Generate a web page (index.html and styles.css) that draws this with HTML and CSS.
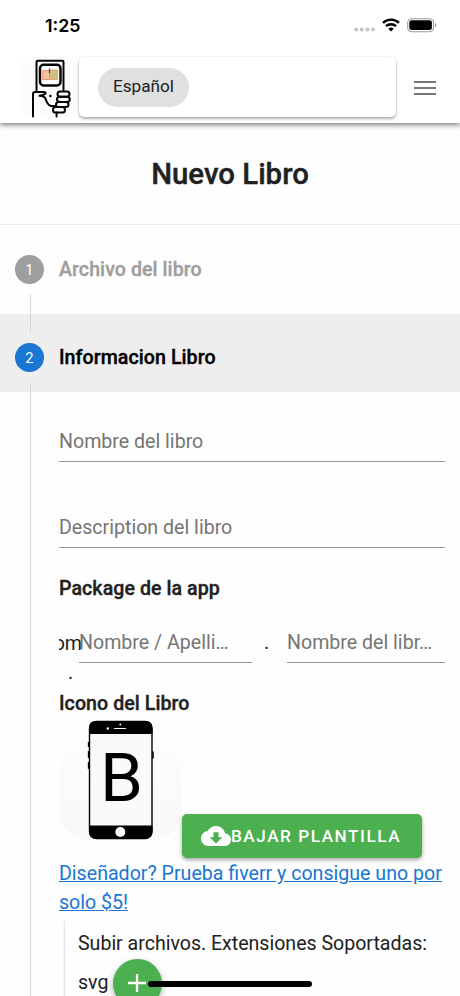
FILE: index.html
```html
<!DOCTYPE html>
<html lang="es">
<head>
<meta charset="utf-8">
<meta name="viewport" content="width=device-width">
<title>Nuevo Libro</title>
<link rel="stylesheet" href="styles.css">
</head>
<body>
<div class="screen">
  <header class="top">
    <div class="status">
      <span class="time">1:25</span>
      <svg class="signal" width="22" height="5" viewBox="0 0 22 5" fill="#c5c5c5"><circle cx="2.2" cy="2.5" r="2"/><circle cx="7.8" cy="2.5" r="2"/><circle cx="13.4" cy="2.5" r="2"/><circle cx="19" cy="2.5" r="2"/></svg>
      <svg class="wifi" width="18" height="14" viewBox="0 0 18 14"><g fill="none" stroke="#000" stroke-width="2.4"><path d="M1 4.9a11.4 11.4 0 0 1 16 0"/><path d="M4 8.2a7.2 7.2 0 0 1 10 0"/></g><path d="M6.3 10.7a4 4 0 0 1 5.4 0L9 13.5z"/></svg>
      <svg class="battery" width="30" height="15" viewBox="0 0 30 15"><rect x=".7" y=".7" width="25.8" height="13" rx="4" fill="#fff" stroke="#9b9b9b" stroke-width="1.1"/><rect x="2.3" y="2.3" width="22.6" height="9.8" rx="2.3"/><path d="M28 5v4.4c1.7-.6 1.7-3.8 0-4.4z" fill="#999"/></svg>
    </div>
    <div class="bar">
      <div class="logo">
        <svg width="60" height="60" viewBox="0 0 60 60" fill="none" stroke="#050505" stroke-width="2" stroke-linejoin="round" stroke-linecap="round">
          <path d="M17.500 33V4q0-1.300 1.300-1.300h24.400q1.300 0 1.300 1.300V32"/>
          <rect x="21" y="6.700" width="20.500" height="20.800" rx="3.500" stroke-width="2.400"/>
          <path d="M24 12.500h7v9h-7z" fill="#edc4a0" stroke="#ed8150" stroke-width=".8"/>
          <path d="M31 12h7.500v9.500H31z" fill="#cfbd83" stroke="#ed9a60" stroke-width=".8"/>
          <path d="M30.500 11v4" stroke="#554e49" stroke-width="1.300"/>
          <path d="M14 58.500V36q0-2 2-2h8.500q3 0 1.800 1.700-1.300 1.500-5.800 2.100 5 .300 6.200 3.200 1.500 5.500 5 7h5M37.600 54.500V58.500"/>
          <circle cx="31.400" cy="38" r=".6" stroke-width="1.300"/>
          <rect x="38.500" y="33.500" width="12" height="5.200" rx="2.600"/>
          <rect x="38" y="38.700" width="12.800" height="5.200" rx="2.600"/>
          <rect x="37" y="43.900" width="12.500" height="5.200" rx="2.600"/>
          <rect x="34" y="49.100" width="12" height="5.400" rx="2.600"/>
        </svg>
      </div>
      <div class="langs"><span class="chip">Español</span></div>
      <button class="menu" aria-label="Menu"><span></span><span></span><span></span></button>
    </div>
  </header>

  <h1 class="title">Nuevo Libro</h1>

  <main class="stepper">
    <div class="step step-first">
      <div class="rail"><span class="dot">1</span><span class="line"></span></div>
      <span class="label">Archivo del libro</span>
    </div>
    <div class="step step-active">
      <div class="rail"><span class="line"></span><span class="dot">2</span><span class="line lower"></span></div>
      <span class="label">Informacion Libro</span>
    </div>
    <div class="content">
      <div class="content-rail"></div>
      <div class="form">
        <div class="field">Nombre del libro</div>
        <div class="field second">Description del libro</div>
        <div class="heading package">Package de la app</div>
        <div class="package-row">
          <div class="prefix"><span class="com">com</span><span class="point">.</span></div>
          <div class="field author">Nombre / Apelli…</div>
          <span class="separator">.</span>
          <div class="field book">Nombre del libr…</div>
        </div>
        <div class="heading icon-heading">Icono del Libro</div>
        <div class="icon-row">
          <div class="app-icon">
            <svg width="123" height="120" viewBox="0 0 123 120">
              <rect x="30.500" y="1.500" width="62.500" height="117" rx="7" fill="#fafafa" stroke="#000" stroke-width="1.400"/>
              <path d="M30 14V8q0-7 7-7h49.500q7 0 7 7v6zM30 105.500h63.500v6q0 7-7 7H37q-7 0-7-7z"/>
              <path d="M29.600 22v5M29.600 31v7M29.600 42v7M94 31.500v7" stroke="#000" stroke-width="1.500"/>
              <path d="M55 8.500h12" stroke="#fff"/><circle cx="48.800" cy="8.500" r="1.200" fill="#fff"/><circle cx="61.300" cy="4.500" r=".9" fill="#fff"/>
              <circle cx="61.300" cy="112" r="5" fill="#fff"/>
              <text class="icon-letter" x="41" y="81" textLength="43" lengthAdjust="spacingAndGlyphs">B</text>
            </svg>
          </div>
          <button class="download">
            <svg width="30" height="30" viewBox="0 0 24 24"><path fill="#fff" d="M19.350 10.040C18.670 6.590 15.640 4 12 4 9.110 4 6.600 5.640 5.350 8.040 2.340 8.360 0 10.910 0 14c0 3.310 2.690 6 6 6h13c2.760 0 5-2.240 5-5 0-2.640-2.050-4.780-4.650-4.960zM17 13l-5 5-5-5h3V9h4v4z"/></svg>
            <span>BAJAR PLANTILLA</span>
          </button>
        </div>
        <a class="designer" href="#">Diseñador? Prueba fiverr y consigue uno por<br>solo $5!</a>
        <div class="upload">
          <div>Subir archivos. Extensiones Soportadas:</div>
          <div class="upload-row"><span>svg</span><button class="add" aria-label="Subir"><svg width="18" height="18" viewBox="0 0 18 18"><path d="M9 0v18M0 9h18" stroke="#fff" stroke-width="2.300"/></svg></button></div>
        </div>
      </div>
    </div>
  </main>
  <div class="home"></div>
</div>
</body>
</html>
```

FILE: styles.css
```css
* { box-sizing: border-box; }
body { margin: 0; background: #fff; overflow: hidden; }
button { border: 0; padding: 0; font: inherit; }
.screen { position: relative; width: 460px; height: 996px; overflow: hidden; font-family: Roboto, sans-serif; font-size: 19.6px; line-height: 29.4px; color: #212121; background: #fefefe; }
.top { height: 123px; background: #fff; box-shadow: 0 2px 5px rgba(0,0,0,.5); }
.status { height: 56px; display: flex; align-items: flex-start; padding-left: 45px; }
.time { width: 309px; padding-top: 15px; font: 600 17.8px/22px Inter, sans-serif; color: #000; }
.signal { margin-top: 27px; margin-right: 6px; }
.wifi { margin-top: 18px; margin-right: 7px; }
.battery { margin-top: 18px; }
.bar { display: flex; padding-left: 19px; }
.logo { width: 60px; height: 62px; padding-top: 2px; border-radius: 16px; background: #fcfcfc; }
.langs { width: 317px; height: 60px; margin-top: 1px; padding: 11px 19px; border-radius: 5px; background: #fff; box-shadow: 0 2px 3px rgba(0,0,0,.3), 0 0 2px rgba(0,0,0,.12); }
.chip { display: flex; align-items: center; justify-content: center; width: 91px; height: 39px; padding-bottom: 1px; border-radius: 20px; background: #e0e0e0; font-size: 17.2px; }
.menu { display: flex; flex-direction: column; gap: 4px; width: 22px; margin: 25px 0 0 18px; background: transparent; }
.menu span { height: 2px; background: #757575; }
.title { height: 102px; margin: 0; border-bottom: 1px solid #ececec; text-align: center; font-size: 29.4px; line-height: 102px; font-weight: 500; -webkit-text-stroke: .4px #212121; }
.step { display: flex; padding-left: 15px; }
.step-first { height: 89px; padding-top: 30px; }
.rail { display: flex; flex-direction: column; align-items: center; width: 29px; margin-right: 15px; }
.dot { flex: none; width: 29px; height: 29px; border-radius: 50%; background: #9e9e9e; color: #fff; text-align: center; font-size: 14.7px; line-height: 30px; }
.line { width: 1px; margin-left: 2px; background: #d6d6d6; }
.step-first .line { height: 20px; margin-top: 10px; }
.label { font-weight: 500; color: #9e9e9e; line-height: 30px; letter-spacing: .06px; -webkit-text-stroke: .35px; }
.step-active { height: 78px; background: #eee; }
.step-active .line { height: 19px; }
.step-active .dot { margin-top: 10px; background: #1976d2; }
.step-active .lower { height: 9px; margin-top: 11px; }
.step-active .label { color: #000; margin-top: 29px; }
.content { display: flex; }
.content-rail { width: 59px; height: 604px; background: linear-gradient(#d6d6d6, #d6d6d6) 30px 0 / 1px 100% no-repeat; }
.form { width: 386px; padding-top: 28px; }
.field { height: 42px; padding-top: 7px; border-bottom: 1px solid #949494; color: #757575; white-space: nowrap; }
.second { margin-top: 44px; }
.heading { font-weight: 500; letter-spacing: .06px; -webkit-text-stroke: .35px; }
.package { margin-top: 26px; }
.package-row { display: flex; height: 86px; padding-top: 24px; }
.prefix { display: flex; flex-direction: column; align-items: center; width: 20px; padding-top: 2px; }
.com { display: flex; justify-content: flex-end; width: 23px; margin-left: 3px; overflow: hidden; }
.point { margin: -1px 0 0 3px; }
.package-row .field { padding-top: 1px; height: 36px; }
.author { width: 173px; }
.separator { width: 35px; padding: 1px 0 0 12px; }
.book { width: 158px; }
.icon-heading { height: 29px; }
.icon-row { display: flex; align-items: flex-end; height: 141px; margin-top: 2px; }
.app-icon { align-self: flex-start; width: 123px; height: 120px; border-radius: 30px; background: linear-gradient(#fefefe, #f8f8f8); }
.app-icon svg { display: block; }
.icon-letter { font-family: Roboto, sans-serif; font-size: 67px; }
.download { display: flex; align-items: center; width: 240px; height: 44px; padding-left: 19px; margin-bottom: 3px; border-radius: 5px; background: #4caf50; color: #fff; font-size: 17.2px; font-weight: 500; letter-spacing: 1.52px; box-shadow: 0 2px 4px rgba(0,0,0,.35); }
.download svg { flex: none; }
.designer { display: block; line-height: 29px; margin-top: -2px; color: #1976d2; white-space: nowrap; }
.upload { margin-left: 6px; height: 100px; padding: 12px 13px; border-radius: 5px; box-shadow: 0 2px 3px rgba(0,0,0,.28); clip-path: inset(-4px 0 0 -4px); white-space: nowrap; letter-spacing: -.02px; }
.upload-row { display: flex; gap: 5px; }
.upload-row > span { padding-top: 9px; }
.add { flex: none; display: flex; align-items: center; justify-content: center; width: 49px; height: 49px; padding-right: 1px; border-radius: 50%; background: #4caf50; box-shadow: 0 3px 7px rgba(0,0,0,.3); }
.home { position: absolute; left: 148px; top: 981px; width: 164px; height: 6px; border-radius: 3px; background: #000; }
```
